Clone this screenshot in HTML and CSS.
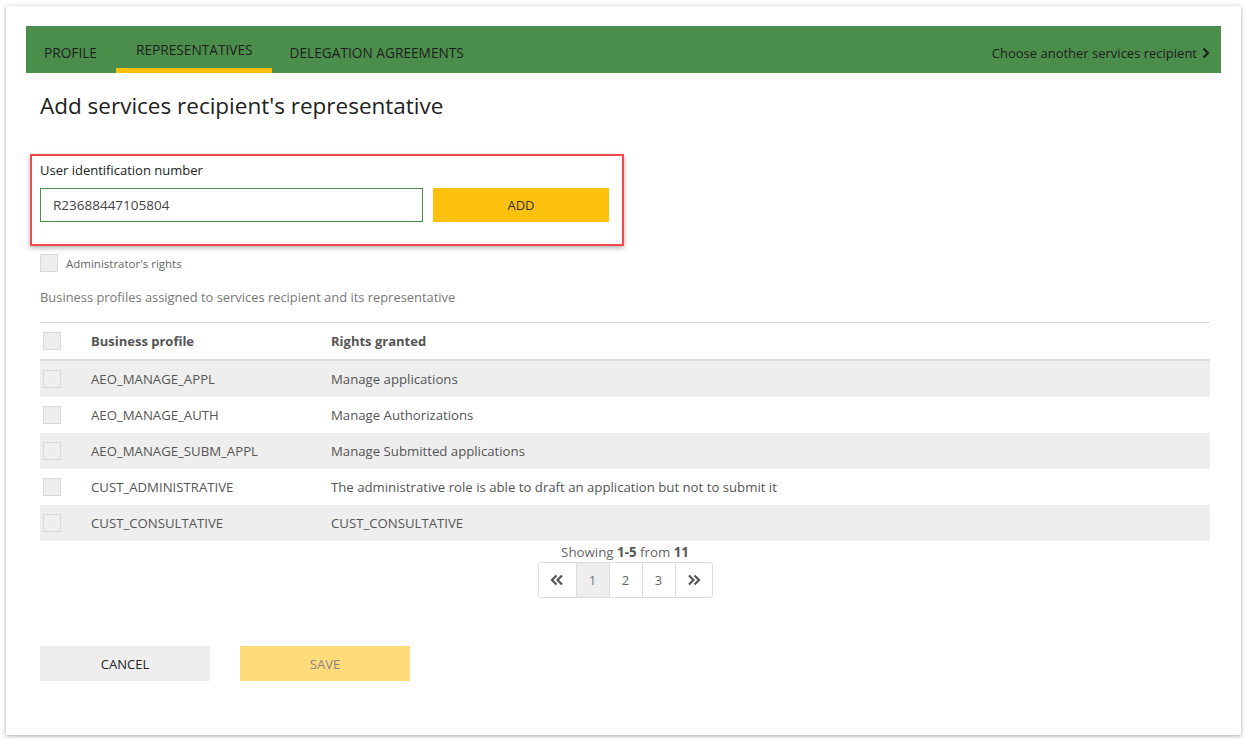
FILE: index.html
```html
<!DOCTYPE html>
<html>
<head>
<meta charset="utf-8">
<link rel="stylesheet" href="styles.css">
</head>
<body>
<div class="panel">
  <nav class="nav">
    <div class="tabs">
      <a class="tab">PROFILE</a>
      <a class="tab active">REPRESENTATIVES</a>
      <a class="tab">DELEGATION AGREEMENTS</a>
    </div>
    <a class="choose">Choose another services recipient
      <svg class="chev" width="8" height="12" viewBox="0 0 8 12"><path d="M1.5 1.5 L6 6 L1.5 10.5" fill="none" stroke="#1e1e1e" stroke-width="2.2"/></svg>
    </a>
  </nav>
  <div class="content">
    <h1 class="title">Add services recipient's representative</h1>
    <div class="highlight">
      <label class="label">User identification number</label>
      <div class="input-row">
        <div class="input">R23688447105804</div>
        <button class="btn-add">ADD</button>
      </div>
    </div>
    <div class="admin">
      <span class="cb"></span>
      <span class="admin-text">Administrator's rights</span>
    </div>
    <p class="hint">Business profiles assigned to services recipient and its representative</p>
    <div class="table">
      <div class="row head">
        <div class="c0"><span class="cb"></span></div>
        <div class="c1">Business profile</div>
        <div class="c2">Rights granted</div>
      </div>
      <div class="row odd">
        <div class="c0"><span class="cb"></span></div>
        <div class="c1">AEO_MANAGE_APPL</div>
        <div class="c2">Manage applications</div>
      </div>
      <div class="row">
        <div class="c0"><span class="cb"></span></div>
        <div class="c1">AEO_MANAGE_AUTH</div>
        <div class="c2">Manage Authorizations</div>
      </div>
      <div class="row odd">
        <div class="c0"><span class="cb"></span></div>
        <div class="c1">AEO_MANAGE_SUBM_APPL</div>
        <div class="c2">Manage Submitted applications</div>
      </div>
      <div class="row">
        <div class="c0"><span class="cb"></span></div>
        <div class="c1">CUST_ADMINISTRATIVE</div>
        <div class="c2">The administrative role is able to draft an application but not to submit it</div>
      </div>
      <div class="row odd">
        <div class="c0"><span class="cb"></span></div>
        <div class="c1">CUST_CONSULTATIVE</div>
        <div class="c2">CUST_CONSULTATIVE</div>
      </div>
    </div>
    <div class="paging">
      <div class="showing">Showing <b>1-5</b> from <b>11</b></div>
      <div class="pager">
        <span class="pg arrow"><svg width="14" height="12" viewBox="0 0 14 12"><path d="M6.5 1.5 L2 6 L6.5 10.5 M12 1.5 L7.5 6 L12 10.5" fill="none" stroke="#555" stroke-width="2.2"/></svg></span>
        <span class="pg current">1</span>
        <span class="pg">2</span>
        <span class="pg">3</span>
        <span class="pg arrow"><svg width="14" height="12" viewBox="0 0 14 12"><path d="M2 1.5 L6.5 6 L2 10.5 M7.5 1.5 L12 6 L7.5 10.5" fill="none" stroke="#555" stroke-width="2.2"/></svg></span>
      </div>
    </div>
    <div class="actions">
      <button class="btn-cancel">CANCEL</button>
      <button class="btn-save">SAVE</button>
    </div>
  </div>
</div>
</body>
</html>
```
FILE: styles.css
```css
* { box-sizing: border-box; }
html, body { margin: 0; padding: 0; background: #fff; }
body {
  font-family: "Open Sans", "Noto Sans", sans-serif;
  color: #333;
  padding: 6px;
}
.panel {
  width: 1235px;
  height: 729px;
  background: #fff;
  box-shadow: 0 1px 4px rgba(0,0,0,0.35);
  padding: 20px;
}
.nav {
  height: 47px;
  background: #4b8d4b;
  display: flex;
  justify-content: space-between;
  align-items: stretch;
}
.tabs { display: flex; }
.tab {
  display: flex;
  align-items: center;
  padding: 11px 19px 0 18px;
  font-size: 13.7px;
  color: #1e1e1e;
  border-bottom: 5px solid transparent;
}
.tab.active {
  padding: 5px 19px 0 20px;
  border-bottom-color: #fcc10c;
}
.choose {
  display: flex;
  align-items: center;
  gap: 5px;
  padding: 6px 11px 0 0;
  font-size: 13px;
  color: #1e1e1e;
}
.chev { margin-top: 1px; }
.content { padding: 0 11px 0 14px; }
.title {
  margin: 19px 0 0;
  font-size: 22.5px;
  font-weight: 400;
  color: #222;
  line-height: 28px;
}
.highlight {
  margin: 34px 0 0 -10px;
  width: 594px;
  border: 2px solid #f2474c;
  box-shadow: 0 2px 5px rgba(0,0,0,0.3);
  padding: 5px 13px 22px 8px;
}
.label {
  display: block;
  font-size: 13px;
  color: #222;
  line-height: 18px;
  margin-bottom: 9px;
}
.input-row { display: flex; gap: 10px; }
.input {
  width: 383px;
  height: 34px;
  border: 1px solid #4b8d4b;
  font-size: 13.5px;
  color: #444;
  padding: 8px 12px;
  line-height: 16px;
}
.btn-add {
  width: 176px;
  height: 34px;
  border: 0;
  background: #fcc10c;
  font-family: inherit;
  font-size: 13px;
  color: #333;
}
.admin {
  display: flex;
  align-items: center;
  gap: 8px;
  margin-top: 8px;
  height: 18px;
}
.cb {
  display: inline-block;
  width: 18px;
  height: 18px;
  border: 1px solid #d8d8d8;
  background: #eeeeee;
}
.admin-text { font-size: 11.5px; color: #666; }
.hint {
  margin: 16px 0 0;
  font-size: 12.9px;
  color: #777;
  line-height: 18px;
}
.table {
  margin-top: 16px;
  border-top: 1px solid #ddd;
}
.row {
  display: flex;
  align-items: center;
  height: 36px;
  font-size: 13.2px;
  color: #555;
}
.row.head {
  height: 38px;
  font-weight: 700;
  font-size: 13px;
  color: #555;
  border-bottom: 2px solid #ddd;
}
.row.odd { background: #eeeeee; }
.c0 { width: 51px; padding-left: 3px; display: flex; }
.c1 { width: 240px; }
.c2 { flex: 1; }
.paging {
  display: flex;
  flex-direction: column;
  align-items: center;
}
.showing {
  font-size: 13.3px;
  color: #666;
  line-height: 20px;
  margin-top: 1px;
}
.showing b { color: #555; }
.pager {
  display: flex;
  border: 1px solid #ddd;
  border-radius: 3px;
  height: 36px;
}
.pg {
  display: flex;
  align-items: center;
  justify-content: center;
  width: 33px;
  font-size: 13px;
  color: #666;
  border-left: 1px solid #ddd;
}
.pg:first-child { border-left: 0; }
.pg.arrow { width: 37px; }
.pg.current { background: #eeeeee; color: #777; }
.actions {
  display: flex;
  gap: 30px;
  margin-top: 48px;
}
.actions button {
  width: 170px;
  height: 35px;
  border: 0;
  font-family: inherit;
  font-size: 13px;
}
.btn-cancel { background: #eeeeee; color: #222; }
.btn-save { background: #ffdb7a; color: #888; }
```
